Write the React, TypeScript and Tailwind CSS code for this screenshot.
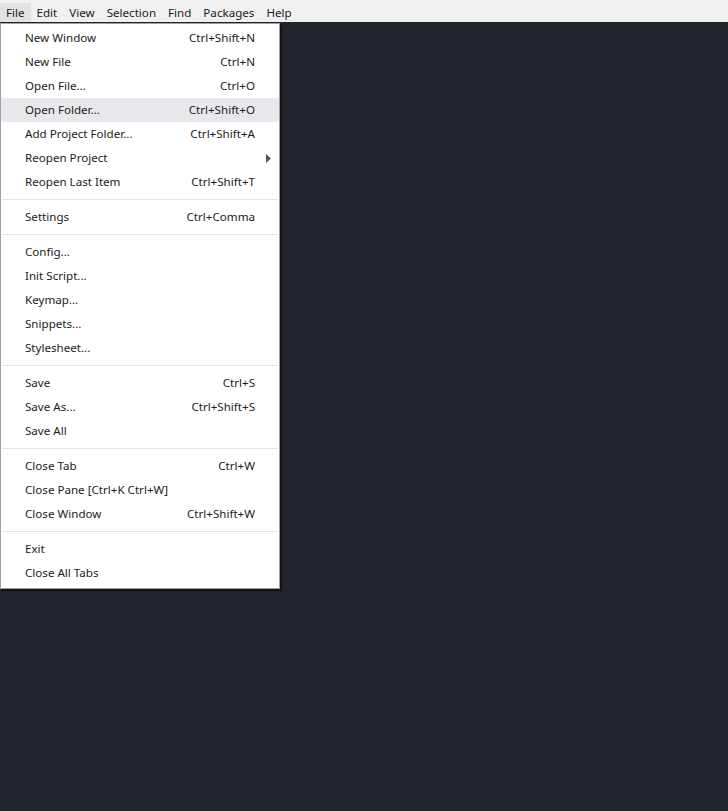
import React from 'react';

type Item =
  | { label: string; shortcut?: string; submenu?: boolean; active?: boolean }
  | 'sep';

const menuBar = ['File', 'Edit', 'View', 'Selection', 'Find', 'Packages', 'Help'];

const items: Item[] = [
  { label: 'New Window', shortcut: 'Ctrl+Shift+N' },
  { label: 'New File', shortcut: 'Ctrl+N' },
  { label: 'Open File...', shortcut: 'Ctrl+O' },
  { label: 'Open Folder...', shortcut: 'Ctrl+Shift+O', active: true },
  { label: 'Add Project Folder...', shortcut: 'Ctrl+Shift+A' },
  { label: 'Reopen Project', submenu: true },
  { label: 'Reopen Last Item', shortcut: 'Ctrl+Shift+T' },
  'sep',
  { label: 'Settings', shortcut: 'Ctrl+Comma' },
  'sep',
  { label: 'Config...' },
  { label: 'Init Script...' },
  { label: 'Keymap...' },
  { label: 'Snippets...' },
  { label: 'Stylesheet...' },
  'sep',
  { label: 'Save', shortcut: 'Ctrl+S' },
  { label: 'Save As...', shortcut: 'Ctrl+Shift+S' },
  { label: 'Save All' },
  'sep',
  { label: 'Close Tab', shortcut: 'Ctrl+W' },
  { label: 'Close Pane [Ctrl+K Ctrl+W]' },
  { label: 'Close Window', shortcut: 'Ctrl+Shift+W' },
  'sep',
  { label: 'Exit' },
  { label: 'Close All Tabs' },
];

const MenuRow: React.FC<{ item: Exclude<Item, 'sep'> }> = ({ item }) => (
  <div
    className={`relative flex h-6 items-center justify-between pl-[24px] pr-[24px] ${
      item.active ? 'bg-[#e8e8ec]' : ''
    }`}
  >
    <span>{item.label}</span>
    {item.shortcut && <span>{item.shortcut}</span>}
    {item.submenu && (
      <svg
        className="absolute right-[8px] top-[8px]"
        width="5"
        height="9"
        viewBox="0 0 5 9"
      >
        <path d="M0 0 L5 4.5 L0 9 Z" fill="#555" />
      </svg>
    )}
  </div>
);

export default function App() {
  return (
    <div
      className="flex h-[811px] w-[728px] flex-col bg-[#21252b] text-[11.6px] text-[#1b1b1b]"
      style={{ fontFamily: '"Noto Sans", "Open Sans", sans-serif' }}
    >
      <div className="flex h-[22px] items-end bg-[#f0f0f0]">
        {menuBar.map((m, i) => (
          <div
            key={m}
            className={`flex h-[19px] items-center px-[6px] ${i === 0 ? 'bg-[#e2e2e2]' : ''}`}
          >
            {m}
          </div>
        ))}
      </div>
      <div className="mt-px w-[283px] pb-[3px]">
        <div className="w-[280px] border border-[#a0a0a0] bg-white pt-[2px] pb-[3px] shadow-[2px_2px_1px_rgba(0,0,0,0.45)]">
          {items.map((it, i) =>
            it === 'sep' ? (
              <div key={i} className="flex h-[11px] items-center px-[1px]">
                <div className="h-px w-full bg-[#e4e4e4]" />
              </div>
            ) : (
              <MenuRow key={i} item={it} />
            )
          )}
        </div>
      </div>
    </div>
  );
}
